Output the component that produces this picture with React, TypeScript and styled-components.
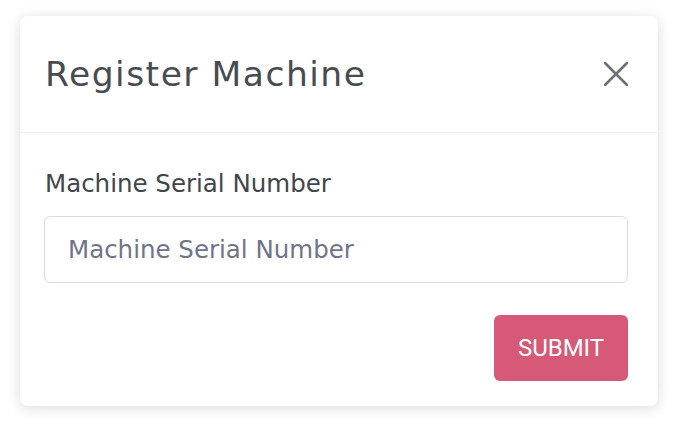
import React from "react";
import styled, { createGlobalStyle } from "styled-components";

const Global = createGlobalStyle`
  html, body { margin: 0; padding: 0; background: #ffffff; }
  body { font-family: "DejaVu Sans", "Liberation Sans", sans-serif; }
  * { box-sizing: border-box; }
`;

const Page = styled.div`
  width: 680px;
  height: 431px;
  padding: 16px 22px 0 20px;
`;

const Dialog = styled.div`
  width: 638px;
  height: 390px;
  background: #ffffff;
  border-radius: 8px;
  box-shadow: 0 2px 14px rgba(0, 0, 0, 0.14);
  display: flex;
  flex-direction: column;
`;

const Header = styled.div`
  height: 117px;
  display: flex;
  align-items: center;
  justify-content: space-between;
  padding: 0 30px 0 25px;
  border-bottom: 1px solid #eef0f4;
`;

const Title = styled.h2`
  margin: 0;
  font-family: "DejaVu Sans", sans-serif;
  font-size: 34.5px;
  font-weight: 400;
  color: #474c52;
  letter-spacing: 1.5px;
`;

const CloseButton = styled.button`
  width: 24px;
  height: 24px;
  padding: 0;
  border: none;
  background: none;
  display: flex;
  cursor: pointer;
`;

const Body = styled.div`
  padding: 36px 30px 0 24px;
  display: flex;
  flex-direction: column;
`;

const Label = styled.label`
  font-family: "DejaVu Sans", sans-serif;
  font-size: 24.5px;
  font-weight: 400;
  line-height: 30px;
  color: #41464c;
  margin-bottom: 17px;
  padding-left: 1px;
`;

const Input = styled.input`
  width: 100%;
  height: 67px;
  border: 1px solid #dcdde0;
  border-radius: 6px;
  padding: 0 23px;
  font-family: "DejaVu Sans", sans-serif;
  font-size: 24.5px;
  color: #333;
  outline: none;
  &::placeholder { color: #70748a; }
`;

const Actions = styled.div`
  display: flex;
  justify-content: flex-end;
  margin-top: 32px;
`;

const Submit = styled.button`
  width: 134px;
  height: 66px;
  border: none;
  border-radius: 6px;
  background: #d65a78;
  color: #ffffff;
  font-family: Roboto, "Liberation Sans", sans-serif;
  font-size: 24px;
  font-weight: 400;
  cursor: pointer;
`;

export default function App() {
  return (
    <>
      <Global />
      <Page>
        <Dialog>
          <Header>
            <Title>Register Machine</Title>
            <CloseButton aria-label="Close">
              <svg width="24" height="24" viewBox="0 0 24 24">
                <path d="M1 1 L23 23 M23 1 L1 23" stroke="#6d7075" strokeWidth="2.6" strokeLinecap="round" />
              </svg>
            </CloseButton>
          </Header>
          <Body>
            <Label>Machine Serial Number</Label>
            <Input placeholder="Machine Serial Number" />
            <Actions>
              <Submit>SUBMIT</Submit>
            </Actions>
          </Body>
        </Dialog>
      </Page>
    </>
  );
}
